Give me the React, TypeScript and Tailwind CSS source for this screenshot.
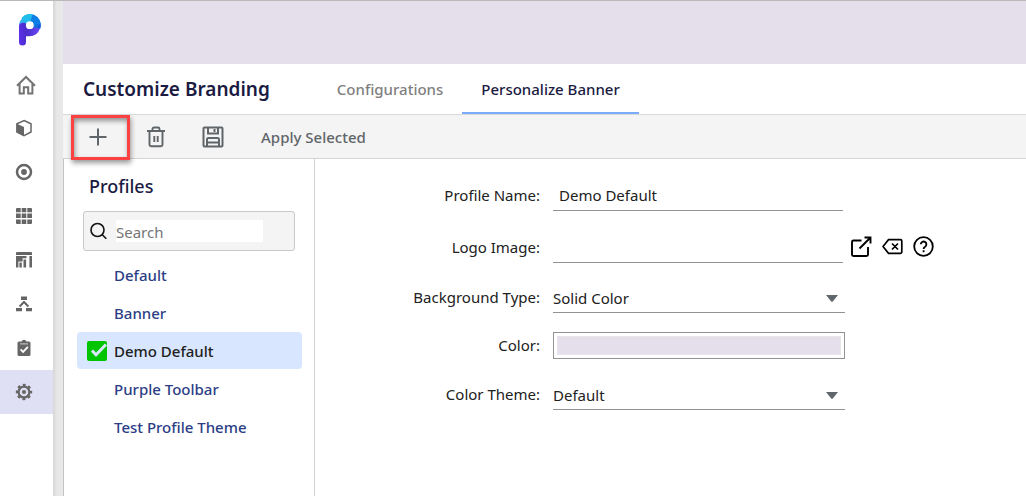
import type { ReactNode } from "react";

const navItems: { label: string; icon: ReactNode }[] = [
  {
    label: "Home",
    icon: (
      <svg viewBox="0 0 20 20" className="mt-0.5 ml-px size-5" fill="none" stroke="#737373" strokeWidth="2">
        <path d="M1 10.8 10 2l9 8.800M3.600 9V18.600h4.200v-6.300h4.400v6.300h4.200V9" />
      </svg>
    ),
  },
  {
    label: "Models",
    icon: (
      <svg viewBox="0 0 18 18" className="size-[18px]" fill="none" stroke="#666" strokeWidth="1.500">
        <path d="M9 1.5 16 4.8v8.2l-7 3.6-7-3.6V4.8z" />
        <path d="M1.4 4.6 9 8v9L1.4 13.2z" fill="#666" stroke="none" />
      </svg>
    ),
  },
  {
    label: "Targets",
    icon: (
      <svg viewBox="0 0 18 18" className="size-[18px]">
        <circle cx="9" cy="9" r="7" fill="none" stroke="#666" strokeWidth="2.500" />
        <circle cx="9" cy="9" r="2.9" fill="#666" />
      </svg>
    ),
  },
  {
    label: "Grids",
    icon: (
      <svg viewBox="0 0 18 18" className="size-[18px]" fill="#666">
        <path d="M2 1h3.7v4.3H1V2a1 1 0 0 1 1-1zM6.7 1h4.6v4.3H6.7zM12.3 1H16a1 1 0 0 1 1 1v3.3h-4.7zM1 6.6h4.7v4.5H1zM6.7 6.6h4.6v4.5H6.7zM12.3 6.6H17v4.5h-4.7zM1 12.4h4.7V17H2a1 1 0 0 1-1-1zM6.7 12.4h4.6V17H6.7zM12.3 12.4H17V16a1 1 0 0 1-1 1h-3.7z" />
      </svg>
    ),
  },
  {
    label: "Reports",
    icon: (
      <svg viewBox="0 0 18 18" className="size-[18px]" fill="#666">
        <path d="M2 1h14a1 1 0 0 1 1 1v2H1V2a1 1 0 0 1 1-1zM1 5h10.5v2.2H7.6v3.3H3.4V16.5H1zM4.4 11.6h2.4v5H4.4zM8.5 8.6h2.6v8H8.5zM14.4 5H17v11.6h-2.6z" />
      </svg>
    ),
  },
  {
    label: "Hierarchy",
    icon: (
      <svg viewBox="0 0 18 18" className="size-[18px]" fill="#666">
        <path d="M6 1.5h6v3.6H6zM1 13h6v3.2H1zM11 13h6v3.2h-6z" />
        <path d="M4.6 11.5 9 7l4.4 4.5" fill="none" stroke="#666" strokeWidth="2" />
      </svg>
    ),
  },
  {
    label: "Tasks",
    icon: (
      <svg viewBox="0 0 18 18" className="size-[18px]">
        <path d="M4 2.6h2.6a2.5 2.5 0 0 1 4.8 0H14a1.5 1.5 0 0 1 1.5 1.5v11.4A1.5 1.5 0 0 1 14 17H4a1.5 1.5 0 0 1-1.5-1.5V4.1A1.5 1.5 0 0 1 4 2.6z" fill="#666" />
        <path d="M5 4.9h8" stroke="#ccc" strokeWidth="1" />
        <path d="m5.6 10.4 2.5 2.5 4.8-5" fill="none" stroke="#fff" strokeWidth="1.8" />
      </svg>
    ),
  },
  {
    label: "Settings",
    icon: (
      <svg viewBox="0 0 18 18" className="size-[18px]" fill="none" stroke="#666">
        <circle cx="9" cy="9" r="5.400" strokeWidth="2.300" />
        <circle cx="9" cy="9" r="7.100" strokeWidth="2.200" strokeDasharray="2.800 2.776" strokeDashoffset="1.400" />
        <circle cx="9" cy="9" r="2.100" fill="#666" stroke="none" />
      </svg>
    ),
  },
];

const profiles = ["Default", "Banner", "Demo Default", "Purple Toolbar", "Test Profile Theme"];

function Logo() {
  return (
    <svg viewBox="0 0 22 32" className="h-8 w-[22px]" role="img" aria-label="Logo">
      <defs>
        <linearGradient id="stem" x1="0" y1="0.6" x2="1" y2="0.5">
          <stop offset="0" stopColor="#5c30e8" />
          <stop offset="0.35" stopColor="#4a2ccb" />
          <stop offset="1" stopColor="#6a48f4" />
        </linearGradient>
        <linearGradient id="bowl" x1="0" y1="0.5" x2="1" y2="0.6">
          <stop offset="0" stopColor="#42b4f0" />
          <stop offset="0.5" stopColor="#15a5ea" />
          <stop offset="1" stopColor="#0b50d8" />
        </linearGradient>
      </defs>
      <path d="M0 11.500A4 4 0 0 1 3.500 8h7.500l10 6.500A11 11 0 0 1 10.500 22.300H7V28a3.500 3.500 0 0 1-7 0z" fill="url(#stem)" />
      <path d="M0 10.800A11 11 0 0 1 21.900 11c0 1.500-.2 2.600-.6 3.800l-6.800-1.500L6.900 9.500Q3 7.500 0 10.800z" fill="url(#bowl)" />
      <path d="M11 0A11 11 0 0 1 21.900 10.500l-7-.5L10.800 7.300z" fill="#0c7ee6" />
      <path d="M2.500 3.800A11 11 0 0 1 13.500 .3L11.500 7.300 7.200 9z" fill="#22bdea" />
      <circle cx="10.800" cy="11.200" r="3.900" fill="#fff" />
    </svg>
  );
}

function Field({ label, id, children }: { label: string; id: string; children: ReactNode }) {
  return (
    <div className="flex items-center gap-[13px]">
      <label htmlFor={id} className="w-[225px] shrink-0 text-right">
        {label}
      </label>
      {children}
    </div>
  );
}

function Dropdown({ id, options }: { id: string; options: string[] }) {
  return (
    <div className="grid w-[292px] items-center">
      <select id={id} className="col-start-1 row-start-1 h-8 appearance-none border-b border-[#929292] bg-transparent pt-1 outline-none">
        {options.map((option) => (
          <option key={option}>{option}</option>
        ))}
      </select>
      <svg viewBox="0 0 12 7" className="pointer-events-none col-start-1 row-start-1 mt-0.5 mr-[7px] h-[7px] w-3 justify-self-end" fill="#5f676c">
        <path d="M0 0h12L6.800 6.400q-.8.800-1.600 0z" />
      </svg>
    </div>
  );
}

export default function App() {
  return (
    <div className="flex min-h-screen border-t border-[#b9b9b9] bg-white font-['Noto_Sans','Open_Sans',sans-serif] text-[15px] text-[#212121]">
      <nav className="flex w-[53px] shrink-0 flex-col">
        <a href="#home" className="mt-[13px] mb-4 ml-[19px] w-[22px]">
          <Logo />
        </a>
        {navItems.map(({ label, icon }) => (
          <a
            key={label}
            href={`#${label.toLowerCase()}`}
            aria-label={label}
            className={`flex h-11 items-center pl-[15px] ${label === "Settings" ? "bg-[#e0e0f5]" : ""}`}
          >
            {icon}
          </a>
        ))}
      </nav>
      <div className="w-2.5 shrink-0 bg-linear-to-r from-[#d6d6d6] to-[#e8e8e8] to-40%" />
      <div className="flex min-w-0 flex-1 flex-col">
        <div className="h-[63px] bg-[#e5dfeb]" />
        <header className="flex h-[51px] items-stretch border-b border-[#d9d9d9] pl-5">
          <h1 className="self-center text-[19px] font-semibold text-[#1b1b42]">Customize Branding</h1>
          <div className="ml-12 flex">
            <a href="#configurations" className="flex items-center px-[19px] font-medium text-[#808080]">
              Configurations
            </a>
            <a href="#banner" className="flex items-center border-b-2 border-[#7aabff] px-[19px] pt-0.5 font-medium text-[#1b1b42]">
              Personalize Banner
            </a>
          </div>
        </header>
        <div className="flex h-11 items-center border-b border-[#d4d4d4] bg-[#f4f4f4] pl-2 text-[#606569]">
          <button
            aria-label="Add profile"
            className="mt-px flex h-[45px] w-[59px] shrink-0 items-center justify-center border-3 border-[#fb4141] pr-1.5 shadow-[1px_3px_5px_#0006,inset_1px_3px_5px_#0006]"
          >
            <svg viewBox="0 0 18 18" className="size-[18px]" stroke="currentColor" strokeWidth="2">
              <path d="M9 .5v17M.5 9h17" />
            </svg>
          </button>
          <button aria-label="Delete profile" className="ml-4">
            <svg viewBox="0 0 20 22" className="h-[22px] w-5" fill="none" stroke="currentColor" strokeWidth="1.900">
              <path d="M1 5h18M3.500 5v13.500A1.800 1.800 0 0 0 5.300 20.300h9.400a1.800 1.800 0 0 0 1.800-1.800V5M6.500 5V3a1.500 1.500 0 0 1 1.500-1.500h4A1.500 1.500 0 0 1 13.500 3v2M8.300 10v6M11.700 10v6" />
            </svg>
          </button>
          <button aria-label="Save profile" className="ml-9">
            <svg viewBox="0 0 22 22" className="size-[22px]" fill="none" stroke="currentColor" strokeWidth="2">
              <path d="M2.500 1.500h17a1 1 0 0 1 1 1v17a1 1 0 0 1-1 1h-17a1 1 0 0 1-1-1v-17a1 1 0 0 1 1-1zM6 1.500v6h10v-6M12.500 3v3M5 20v-6.500a1.500 1.500 0 0 1 1.500-1.500h9a1.500 1.500 0 0 1 1.500 1.500V20M5 16.500h12" />
            </svg>
          </button>
          <button className="ml-[37px] pt-0.5 font-medium">Apply Selected</button>
        </div>
        <main className="flex flex-1 border-l border-[#c4c4c4]">
          <aside className="w-[251px] shrink-0 border-r border-[#d4d4d4] pt-[15px] pr-3 pl-[13px]">
            <h2 className="pl-3 text-lg leading-6 font-medium text-[#1b1b42]">Profiles</h2>
            <div className="mt-[13px] mr-[7px] ml-1.5 flex h-10 items-center rounded-[3px] border border-[#c9c9c9] bg-[#f4f4f4] pl-1.5">
              <svg viewBox="0 0 18 18" className="size-[18px] shrink-0" fill="none" stroke="#111" strokeWidth="1.600">
                <circle cx="7.500" cy="8" r="6.500" />
                <path d="m12.300 12.800 4 4" />
              </svg>
              <input type="search" aria-label="Search profiles" placeholder="Search" className="ml-2 h-[22px] w-[147px] bg-white pt-0.5 outline-none placeholder:text-[#757575]" />
            </div>
            <ul className="mt-[5px] flex flex-col gap-px">
              {profiles.map((profile) => {
                const selected = profile === "Demo Default";
                return (
                  <li key={profile}>
                    <button
                      aria-pressed={selected}
                      className={`flex h-[37px] w-full items-center gap-[7px] rounded pl-2.5 font-medium ${selected ? "bg-[#d9e6ff] text-[#212121]" : "text-[#2c3e86]"}`}
                    >
                      <svg viewBox="0 0 20 20" className="size-5">
                        {selected && (
                          <>
                            <rect width="20" height="20" rx="2" fill="#00c400" />
                            <path d="m5 9.500 4 4.300L19 3.500" fill="none" stroke="#d9e6ff" strokeWidth="3" />
                          </>
                        )}
                      </svg>
                      <span className="pt-px">{profile}</span>
                    </button>
                  </li>
                );
              })}
            </ul>
          </aside>
          <form className="flex min-w-0 flex-1 flex-col pt-5">
            <Field label="Profile Name:" id="name">
              <input id="name" defaultValue="Demo Default" className="h-8 w-[290px] border-b border-[#929292] px-1.5 outline-none" />
            </Field>
            <div className="mt-5">
              <Field label="Logo Image:" id="logo">
                <input id="logo" className="h-8 w-[290px] border-b border-[#929292] px-1.5 outline-none" />
                <div className="-ml-[5px] flex items-center gap-2.5 pb-0.5 text-black">
                  <button type="button" aria-label="Choose image">
                    <svg viewBox="0 0 21 21" className="size-[21px]" fill="none" stroke="currentColor" strokeWidth="1.900">
                      <path d="M10.500 4.500H2.500a1.500 1.500 0 0 0-1.500 1.500v12.500A1.500 1.500 0 0 0 2.500 20h13a1.500 1.500 0 0 0 1.500-1.500V11M13.500 1.500h6v6M19.500 1.500 8.500 12.500" />
                    </svg>
                  </button>
                  <button type="button" aria-label="Clear image">
                    <svg viewBox="0 0 21 21" className="size-[21px]" fill="none" stroke="currentColor" strokeWidth="1.700">
                      <path d="M6.500 3.700H18.500a1.300 1.300 0 0 1 1.300 1.300v11a1.300 1.300 0 0 1-1.300 1.300H6.500L1 10.500zM10 7.500l6 6M16 7.500l-6 6" />
                    </svg>
                  </button>
                  <button type="button" aria-label="Help">
                    <svg viewBox="0 0 21 21" className="size-[21px]" fill="none" stroke="currentColor" strokeWidth="1.800">
                      <circle cx="10.500" cy="10.500" r="9.300" />
                      <path d="M7.800 8.300a2.800 2.800 0 1 1 4.300 2.400c-1 .6-1.500 1.100-1.500 2.300" />
                      <path d="M10.600 14.200v2" />
                    </svg>
                  </button>
                </div>
              </Field>
            </div>
            <div className="mt-[18px]">
              <Field label="Background Type:" id="type">
                <Dropdown id="type" options={["Solid Color", "Gradient", "Image"]} />
              </Field>
            </div>
            <div className="mt-[19px]">
              <Field label="Color:" id="color">
                <input
                  id="color"
                  type="color"
                  defaultValue="#e5dfeb"
                  className="h-[27px] w-[292px] appearance-none border border-[#929292] bg-white p-[3px] [&::-webkit-color-swatch]:border [&::-webkit-color-swatch]:border-[#e8e4ea] [&::-webkit-color-swatch-wrapper]:p-0"
                />
              </Field>
            </div>
            <div className="mt-[19px]">
              <Field label="Color Theme:" id="theme">
                <Dropdown id="theme" options={["Default", "Dark"]} />
              </Field>
            </div>
          </form>
        </main>
      </div>
    </div>
  );
}
